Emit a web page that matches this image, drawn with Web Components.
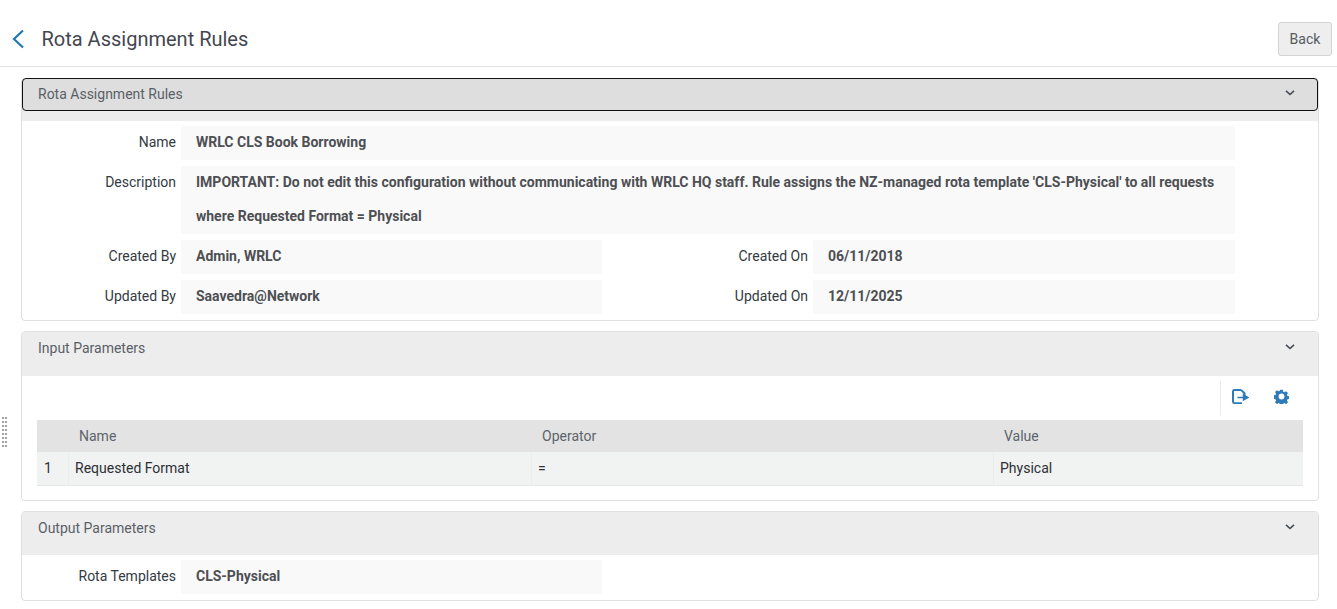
<!DOCTYPE html>
<html lang="en"><head><meta charset="utf-8"><title>Rota Assignment Rules</title>
<style>
html,body{margin:0;padding:0;background:#fff;height:609px;overflow:hidden}
body{font:14px Roboto,sans-serif;color:#333;position:relative}
</style></head><body>
<rota-page></rota-page>
<script>
function def(name, html){
  customElements.define(name, class extends HTMLElement{
    constructor(){super();const t=document.createElement('template');t.innerHTML=html;this.attachShadow({mode:'open'}).appendChild(t.content.cloneNode(true));}
  });
}
def('page-header',`<style>
:host{display:flex;align-items:flex-start;height:66px;border-bottom:1px solid #e3e3e3;padding:0 5px 0 11px}
svg{width:14px;height:22px;display:block;margin-top:28px}
h1{margin:27px 0 0 16.500px;font:400 20px/24px Roboto,sans-serif;color:#44474f;flex:1}
button{width:54px;height:34px;margin-top:22px;border:1px solid #d3d3d3;border-radius:3px;background:#eee;font:14px Roboto,sans-serif;color:#555a60;padding:0}
</style>
<svg viewBox="0 0 14 22"><path d="M12 2.500 3 11l9 8.500" fill="none" stroke="#2079ae" stroke-width="2.200"/></svg>
<h1><slot></slot></h1><button>Back</button>`);
def('rule-panel',`<style>
:host{display:block;margin:0 18px 10px 21px;border:1px solid #dfdfdf;border-radius:4px;background:#fff;position:relative}
header{height:var(--head,44px);background:#ededed;border-radius:3px 3px 0 0;color:#5a5f66;font-size:14px;position:relative}
.bar{display:block;height:44px;box-sizing:border-box;padding:0 0 0 16px;line-height:32px}
:host([focused]) header{height:43px}
:host([focused]) .bar{height:33px;margin-top:-1px;background:#dedede;border:1px solid #111;border-radius:4px;line-height:30px;padding-left:15px}
svg{position:absolute;right:22px;top:11px;width:12px;height:8px}
.body{padding:var(--pad,5px 0 6px)}
</style>
<header><span class="bar"><slot name="title"></slot></span><svg viewBox="0 0 12 8"><path d="M2 1.800 6 5.500l4-3.700" fill="none" stroke="#444b55" stroke-width="1.600"/></svg></header>
<div class="body"><slot></slot></div>`);
def('field-grid',`<style>
:host{display:grid;grid-template-columns:159px 421px 211px 422px;row-gap:6px}
</style><slot></slot>`);
def('field-row',`<style>
:host{display:contents}
.t{margin:-1px 0 1px}
.l{grid-column:var(--lc,1);padding-right:5px;text-align:right;font-size:14px;line-height:34px;color:#333a42}
.v{grid-column:var(--vc,2);background:#f9f9f9;padding:0 15px;font-weight:700;color:#4d4f53;line-height:34px;min-height:34px;font-size:14px}
:host([wide]) .v{grid-column:2 / 5}
</style><div class="l"><div class="t"><slot name="label"></slot></div></div><div class="v"><div class="t"><slot></slot></div></div>`);
def('data-table',`<style>
:host{display:grid;grid-template-columns:31px 463px 462px 310px;margin:0 15px;font-size:14px}
</style><slot></slot>`);
def('table-cell',`<style>
:host{display:block;height:34px;line-height:33px;background:#f1f3f3;color:#2d2f33;padding-left:6px;box-sizing:border-box;border-bottom:1px solid #e6e8e8;border-left:1px solid #eaecec}
:host([first]){border-left:0;padding-left:7px}
:host([head]){height:32px;line-height:32px;background:#e3e3e3;color:#5d636b;padding-left:11px;border:0}
</style><slot></slot>`);
def('tool-bar',`<style>
:host{display:flex;justify-content:flex-end;height:34px;padding:5px 29px 0 0;margin-bottom:5px}
.sep{width:1px;height:34px;background:#ebebeb;margin-right:11px}
svg{width:17px;height:15px;display:block;margin-top:8px}
svg+svg{margin-left:25px;width:15px;height:15px}
</style><span class="sep"></span>
<svg viewBox="0 0 17 16" preserveAspectRatio="none"><path d="M9 1H2.500A1.500 1.500 0 0 0 1 2.500v11A1.500 1.500 0 0 0 2.500 15H10M9 1l3.500 3.500V7" fill="none" stroke="#2f7ab9" stroke-width="2"/><path d="M5.500 9h6M11.500 6.200 16 9l-4.500 2.800z" fill="#2f7ab9" stroke="#2f7ab9" stroke-width="1.500"/></svg>
<svg viewBox="0 0 16 16"><path fill="#2f7ab9" fill-rule="evenodd" d="M6.600.8h2.800l.4 2 1.300.6 1.800-1.100 2 2-1.100 1.800.6 1.300 2 .4v2.800l-2 .4-.6 1.300 1.100 1.800-2 2-1.800-1.100-1.300.6-.4 2H6.600l-.4-2-1.300-.6-1.800 1.100-2-2 1.100-1.800-.6-1.300-2-.4V6.800l2-.4.6-1.300L1.100 3.300l2-2 1.800 1.100 1.300-.6zM8 4.900a3.100 3.100 0 1 0 0 6.200 3.100 3.100 0 0 0 0-6.200z"/></svg>`);
def('drag-handle',`<style>
:host{position:absolute;left:2px;top:417px;width:5px;height:30px}
svg{display:block}
</style><svg width="5" height="30" aria-hidden="true"><defs><pattern id="d" width="3" height="4" patternUnits="userSpaceOnUse"><rect width="2" height="2" fill="#a0a0a0"/></pattern></defs><rect width="5" height="30" fill="url(#d)"/></svg>`);
def('rota-page',`<style>:host{display:block}.gap{height:11px}</style>
<page-header>Rota Assignment Rules</page-header>
<div class="gap"></div>
<rule-panel focused><span slot="title">Rota Assignment Rules</span>
<field-grid>
<field-row wide><span slot="label">Name</span>WRLC CLS Book Borrowing</field-row>
<field-row wide><span slot="label">Description</span>IMPORTANT: Do not edit this configuration without communicating with WRLC HQ staff. Rule assigns the NZ-managed rota template 'CLS-Physical' to all requests where Requested Format = Physical</field-row>
<field-row><span slot="label">Created By</span>Admin, WRLC</field-row>
<field-row style="--lc:3;--vc:4"><span slot="label">Created On</span>06/11/2018</field-row>
<field-row><span slot="label">Updated By</span>Saavedra@Network</field-row>
<field-row style="--lc:3;--vc:4"><span slot="label">Updated On</span>12/11/2025</field-row>
</field-grid></rule-panel>
<rule-panel style="--pad:0 0 14px"><span slot="title">Input Parameters</span>
<tool-bar></tool-bar>
<data-table>
<table-cell head></table-cell><table-cell head>Name</table-cell><table-cell head>Operator</table-cell><table-cell head>Value</table-cell>
<table-cell first>1</table-cell><table-cell>Requested Format</table-cell><table-cell>=</table-cell><table-cell>Physical</table-cell>
</data-table></rule-panel>
<rule-panel style="--head:43px"><span slot="title">Output Parameters</span>
<field-grid><field-row><span slot="label">Rota Templates</span>CLS-Physical</field-row></field-grid></rule-panel>
<drag-handle></drag-handle>`);
</script>
</body></html>
